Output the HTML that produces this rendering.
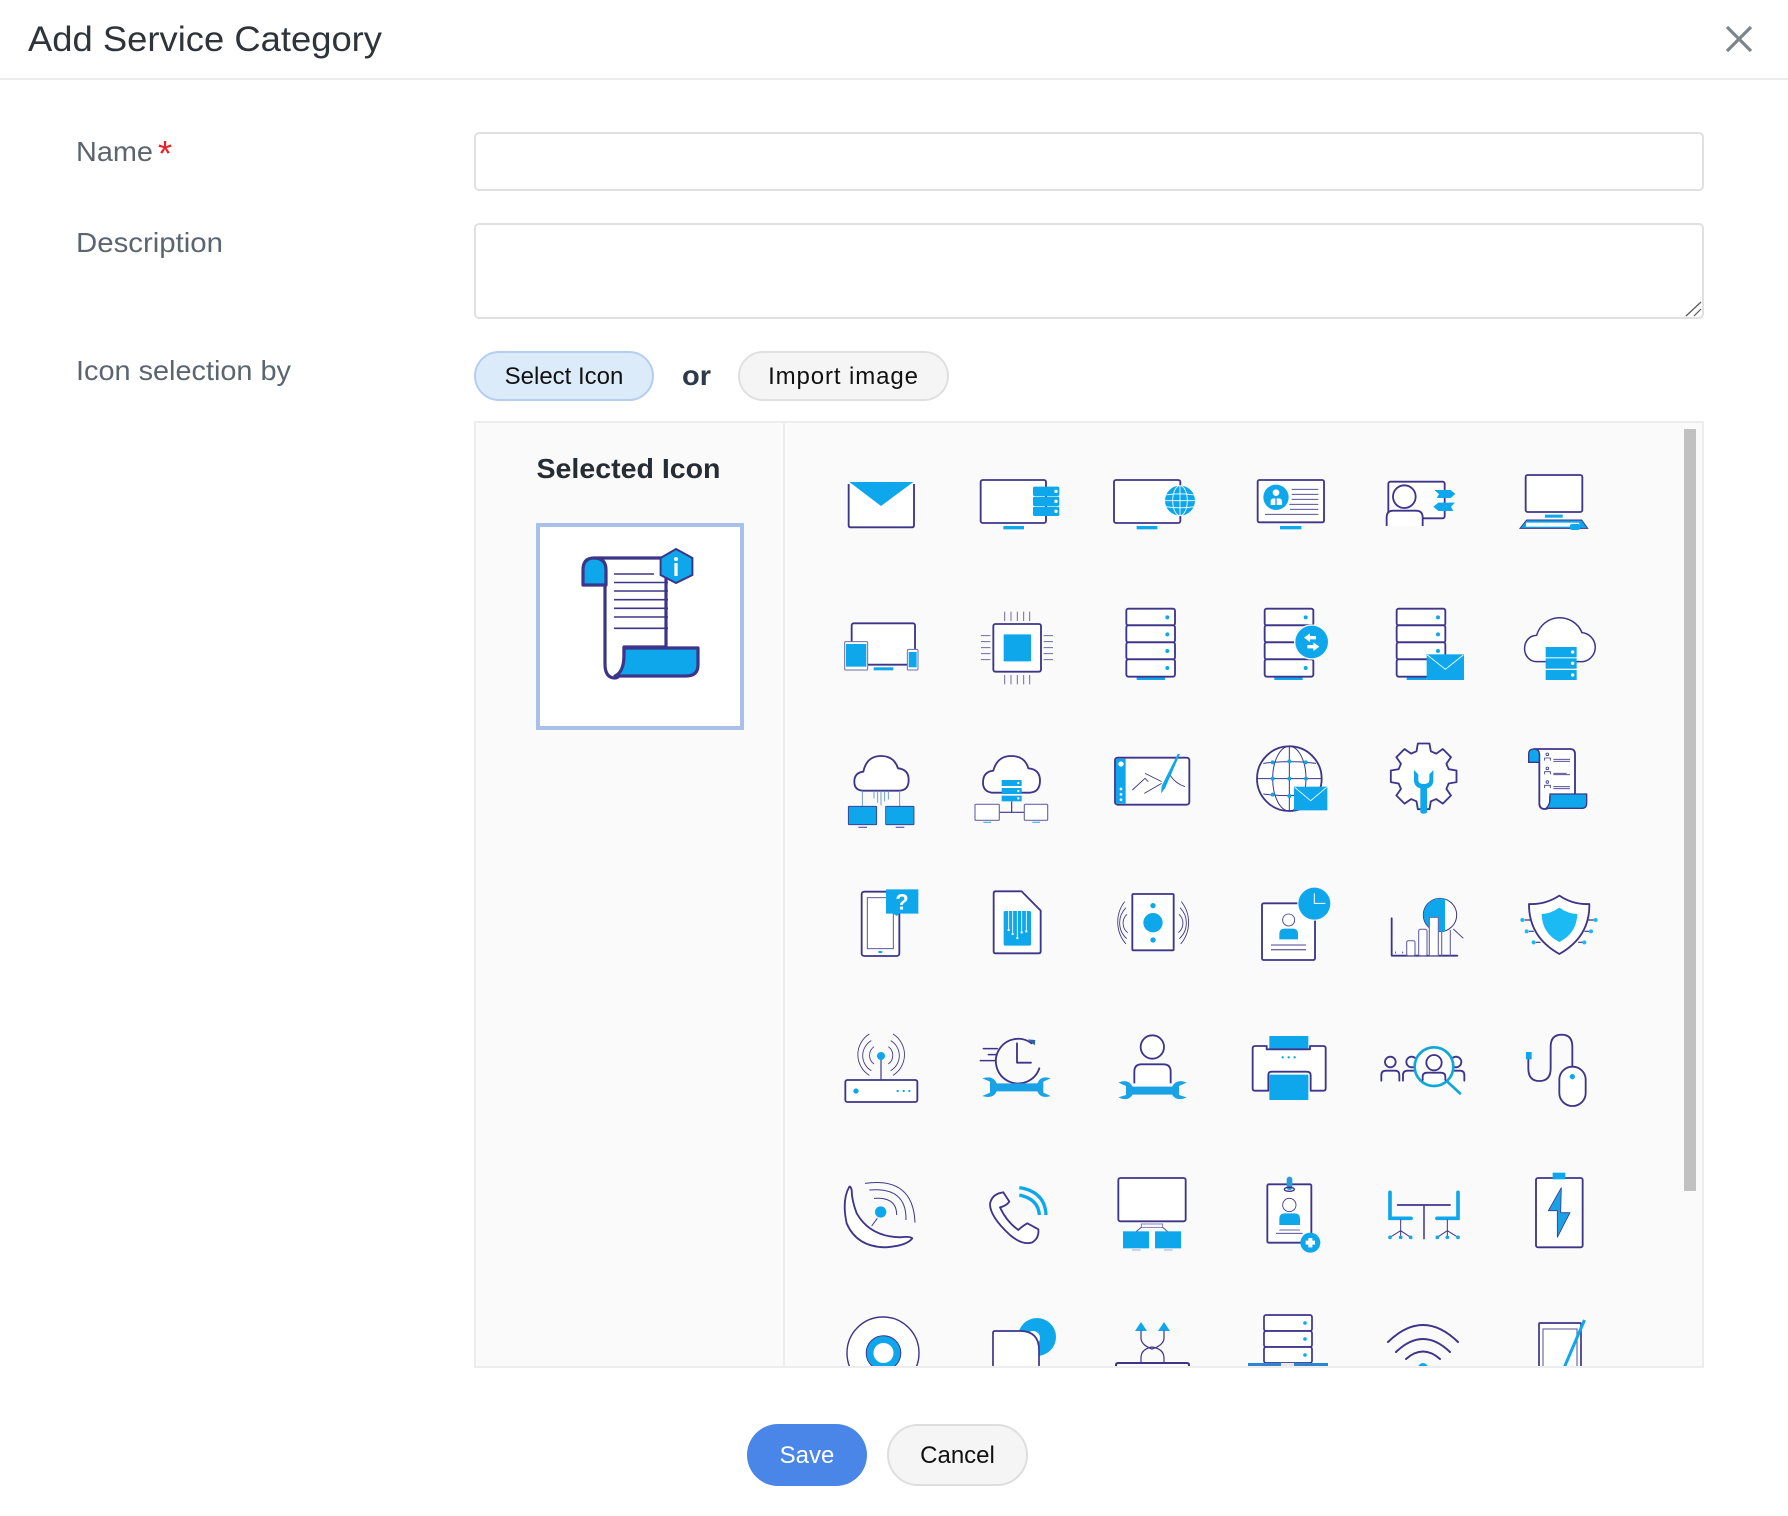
<!DOCTYPE html>
<html lang="en">
<head>
<meta charset="utf-8">
<title>Add Service Category</title>
<style>
html,body{margin:0;padding:0;background:#fff;}
body{width:1788px;height:1516px;position:relative;overflow:hidden;font-family:"Liberation Sans",sans-serif;}
.abs{position:absolute;box-sizing:border-box;}
.hline{left:0;top:78px;width:1788px;height:2px;background:#ececec;}
.field{left:474px;width:1230px;border:2px solid #e0e0e0;border-radius:5px;background:#fff;margin:0;padding:0;outline:none;display:block;resize:none;}
.btn{border-radius:25px;font-family:"Liberation Sans",sans-serif;font-size:24px;color:#111;padding:2px 0 0;margin:0;text-align:center;}
.panel{left:474px;top:421px;width:1230px;height:947px;background:#fafafa;border:2px solid #ededed;}
.divider{left:783px;top:423px;width:2px;height:943px;background:#ededed;}
.selbox{left:536px;top:523px;width:208px;height:207px;background:#fff;border:4px solid #a9c1ea;}
.scroll{left:1684px;top:429px;width:12px;height:762px;background:#c1c1c1;}
svg{position:absolute;left:0;top:0;pointer-events:none;}
.o{fill:#fff;stroke:#3d3589;stroke-width:5.5;stroke-linejoin:round;}
.n{fill:none;stroke:#3d3589;stroke-width:5.5;stroke-linecap:round;stroke-linejoin:round;}
.t{fill:none;stroke:#3d3589;stroke-width:2.6;}
.g{fill:none;stroke:#6f6ba8;stroke-width:3;}
.c{fill:#0ea7ec;}
.w{fill:#fff;}
.wl{fill:none;stroke:#fff;stroke-width:2.6;}
.cl{fill:none;stroke:#0ea7ec;stroke-linecap:round;}
.o2{fill:#fff;stroke:#3d3589;stroke-width:1.7;}
.n2{fill:none;stroke:#3d3589;stroke-width:1.7;stroke-linecap:round;}
.n3{fill:none;stroke:#3d3589;stroke-width:3.2;stroke-linejoin:round;}
.c3{fill:#0ea7ec;stroke:#3d3589;stroke-width:3.2;stroke-linejoin:round;}
.l3{fill:none;stroke:#3d3589;stroke-width:1.6;}
</style>
</head>
<body>
<div class="abs hline"></div>
<input class="abs field" style="top:132px;height:59px;" type="text" aria-label="Name">
<textarea class="abs field" style="top:223px;height:96px;" aria-label="Description"></textarea>
<button class="abs btn" style="left:474px;top:351px;width:180px;height:50px;background:#dcebfa;border:2px solid #b5cdf1;">Select Icon</button>
<button class="abs btn" style="left:738px;top:351px;width:211px;height:50px;background:#f5f5f5;border:2px solid #e0e0e0;letter-spacing:.9px;">Import image</button>
<div class="abs panel"></div>
<div class="abs divider"></div>
<div class="abs selbox"></div>
<div class="abs scroll"></div>
<button class="abs btn" style="left:747px;top:1424px;width:120px;height:62px;border-radius:31px;background:#4a86e8;border:0;color:#fff;">Save</button>
<button class="abs btn" style="left:887px;top:1424px;width:141px;height:62px;border-radius:31px;background:#f5f5f5;border:2px solid #dedede;">Cancel</button>

<svg width="1788" height="1516" viewBox="0 0 1788 1516" xmlns="http://www.w3.org/2000/svg">
<defs><clipPath id="pc"><rect x="785" y="423" width="899" height="943"/></clipPath></defs>

<!-- text -->
<text x="28" y="51" font-family="Liberation Sans, sans-serif" font-size="35" fill="#2e3439" textLength="354" lengthAdjust="spacingAndGlyphs">Add Service Category</text>
<text x="76" y="161" font-family="Liberation Sans, sans-serif" font-size="28" fill="#5b6570" textLength="77" lengthAdjust="spacingAndGlyphs">Name</text>
<text x="158" y="166" font-family="Liberation Sans, sans-serif" font-size="36" fill="#ee1c25">*</text>
<text x="76" y="252" font-family="Liberation Sans, sans-serif" font-size="28" fill="#5b6570" textLength="147" lengthAdjust="spacingAndGlyphs">Description</text>
<text x="76" y="380" font-family="Liberation Sans, sans-serif" font-size="28" fill="#5b6570" textLength="215" lengthAdjust="spacingAndGlyphs">Icon selection by</text>
<text x="682" y="385" font-family="Liberation Sans, sans-serif" font-size="28" font-weight="700" fill="#2d3a47" textLength="29" lengthAdjust="spacingAndGlyphs">or</text>
<text x="536.5" y="478" font-family="Liberation Sans, sans-serif" font-size="28" font-weight="700" fill="#262c33" textLength="184" lengthAdjust="spacingAndGlyphs">Selected Icon</text>

<!-- close -->
<path d="M1727 27L1751 51M1751 27L1727 51" stroke="#7b858b" stroke-width="3.2" fill="none"/>
<!-- resize handle -->
<path d="M1686 316L1701 302M1694 316L1701 309" stroke="#555" stroke-width="1.2" fill="none"/>

<!-- selected icon -->
<path class="n3" style="fill:#fff" d="M594 558H666V647H624V660Q622 678 615 678Q605 678 605 664V585"/>
<path class="c3" d="M583 585V570Q583 558 594 558Q606 558 606 570V585Z"/>
<path class="l3" d="M614 574H654M614 582.5H668M614 591H668M614 599.7H668M614 608.3H668M614 617H668M614 628.3H668"/>
<path class="c3" d="M624 648H698V665Q698 676 686 676H615Q624 672 624 655Z"/>
<path fill="#0ea7ec" stroke="#3d3589" stroke-width="2" d="M676 549L692.4 558V575L676 583L660.6 575V558Z"/>
<circle cx="676" cy="559" r="2" class="w"/><rect x="674.4" y="563" width="3.2" height="13" class="w"/>

<!-- Rows 1-2, cols 1-3 -->
<g transform="translate(800 440) scale(.33333)">
 <path class="o" d="M146 132V256Q146 262 152 262H336Q342 262 342 256V132"/>
 <path class="c" d="M148 126H340L243 198Z"/>

 <rect class="o" x="542" y="120" width="196" height="129" rx="6"/>
 <rect class="c" x="610" y="258" width="62" height="10"/>
 <rect class="c" x="699" y="140" width="79" height="28" rx="5"/><rect class="c" x="699" y="170" width="79" height="28" rx="5"/><rect class="c" x="699" y="200" width="79" height="28" rx="5"/>
 <circle class="w" cx="768" cy="154" r="5"/><circle class="w" cx="768" cy="184" r="5"/><circle class="w" cx="768" cy="214" r="5"/>

 <rect class="o" x="942" y="120" width="199" height="129" rx="6"/>
 <rect class="c" x="1010" y="258" width="62" height="10"/>
 <circle class="c" cx="1140" cy="182" r="45"/>
 <path class="wl" d="M1140 137V227M1098 165Q1140 158 1182 165M1095 182H1185M1098 200Q1140 207 1182 200"/><ellipse class="wl" cx="1140" cy="182" rx="22" ry="45"/>

 <rect class="o" x="155" y="550" width="190" height="124" rx="6"/>
 <rect class="c" x="221" y="682" width="59" height="9"/>
 <rect class="w" x="134" y="605" width="69" height="85" rx="3" stroke="#6f6ba8" stroke-width="3"/>
 <rect class="c" x="138" y="612" width="61" height="68"/>
 <rect class="w" x="322" y="628" width="32" height="62" rx="4" stroke="#6f6ba8" stroke-width="3"/>
 <rect class="c" x="326" y="636" width="24" height="46"/>

 <rect class="o" x="580" y="552" width="143" height="143" rx="6"/>
 <rect class="c" x="611" y="583" width="82" height="81" rx="2"/>
 <path class="g" d="M614 515V543M633 515V543M652 515V543M671 515V543M689 515V543M614 705V733M633 705V733M652 705V733M671 705V733M689 705V733M543 587H571M543 605H571M543 623H571M543 641H571M543 659H571M731 587H759M731 605H759M731 623H759M731 641H759M731 659H759"/>

 <rect class="c" x="1010" y="708" width="85" height="12"/>
 <rect class="o" x="979" y="506" width="146" height="50" rx="6"/><rect class="o" x="979" y="556" width="146" height="51" rx="6"/><rect class="o" x="979" y="607" width="146" height="51" rx="6"/><rect class="o" x="979" y="658" width="146" height="52" rx="6"/>
 <circle class="c" cx="1102" cy="532" r="6"/><circle class="c" cx="1102" cy="583" r="6"/><circle class="c" cx="1102" cy="633" r="6"/><circle class="c" cx="1102" cy="684" r="6"/>
</g>

<!-- Rows 1-2, cols 4-6 -->
<g transform="translate(1240 440) scale(.33333)">
 <rect class="o" x="53" y="120" width="199" height="127" rx="5"/>
 <rect class="c" x="120" y="258" width="64" height="10"/>
 <circle class="c" cx="108" cy="172" r="38"/><circle class="w" cx="108" cy="158" r="10"/>
 <path class="w" d="M92 195V184Q92 175 102 175H106V195ZM110 195V175H116Q126 175 126 184V195Z"/>
 <path class="t" d="M155 148H235M155 163H235M155 178H235M148 193H235M150 208H235M75 223H235"/>

 <rect class="o" x="445" y="125" width="169" height="110" rx="6"/>
 <path class="c" d="M583 150H632L646 162L632 174H590L597 162ZM645 188H595L580 200L595 213H640L633 200Z"/>
 <circle cx="493" cy="170" r="34" class="o"/>
 <path class="o" d="M440 258V232Q440 212 460 212H528Q548 212 548 232V258"/>

 <rect class="o" x="857" y="105" width="170" height="111" rx="6"/>
 <rect class="c" x="915" y="224" width="53" height="9"/>
 <path d="M860 240H1025L1043 265H840Z" fill="#0ea7ec" stroke="#3d3589" stroke-width="3"/>
 <rect class="w" x="858" y="248" width="160" height="12"/>
 <rect class="c" x="990" y="252" width="30" height="18" rx="6"/>

 <rect class="c" x="103" y="708" width="85" height="12"/>
 <rect class="o" x="74" y="506" width="146" height="50" rx="6"/><rect class="o" x="74" y="556" width="146" height="51" rx="6"/><rect class="o" x="74" y="607" width="146" height="51" rx="6"/><rect class="o" x="74" y="658" width="146" height="52" rx="6"/>
 <circle class="c" cx="197" cy="532" r="6"/><circle class="c" cx="197" cy="684" r="6"/>
 <circle cx="215" cy="606" r="53" fill="#fafafa"/><circle class="c" cx="215" cy="606" r="49"/>
 <path class="w" d="M192 593L210 580V588H228V598H210V606ZM238 620L220 607V615H202V625H220V633Z"/>

 <rect class="c" x="500" y="708" width="60" height="12"/>
 <rect class="o" x="470" y="506" width="146" height="50" rx="6"/><rect class="o" x="470" y="556" width="146" height="51" rx="6"/><rect class="o" x="470" y="607" width="146" height="51" rx="6"/><rect class="o" x="470" y="658" width="146" height="52" rx="6"/>
 <circle class="c" cx="594" cy="532" r="6"/><circle class="c" cx="594" cy="583" r="6"/><circle class="c" cx="594" cy="633" r="6"/>
 <rect class="c" x="560" y="643" width="112" height="77"/>
 <path class="wl" d="M562 645L616 688L670 645"/>

 <path class="o" style="stroke-width:4.5" d="M888 665A34 38 0 0 1 890 586A72 72 0 0 1 1026 578A44 44 0 0 1 1030 665Z"/>
 <rect class="c" x="917" y="621" width="93" height="31"/><rect class="c" x="917" y="655" width="93" height="31"/><rect class="c" x="917" y="690" width="93" height="30"/>
 <circle class="w" cx="998" cy="636" r="5"/><circle class="w" cx="998" cy="670" r="5"/><circle class="w" cx="998" cy="705" r="5"/>
</g>

<!-- Rows 3-4, cols 1-3 -->
<g transform="translate(800 730) scale(.33333)">
 <path class="o" d="M190 182Q163 182 163 155Q163 128 190 125Q200 78 243 78Q282 78 294 115Q326 118 326 150Q326 182 296 182Z"/>
 <path class="t" style="stroke:#5e8fc0" d="M187 182V228M299 182V228M222 182V206M233 182V218M243 182V226M254 182V214M265 182V208"/>
 <rect x="145" y="229" width="85" height="55" rx="2" fill="#0ea7ec" stroke="#3d3589" stroke-width="2.5"/>
 <rect x="257" y="229" width="85" height="55" rx="2" fill="#0ea7ec" stroke="#3d3589" stroke-width="2.5"/>
 <rect x="175" y="290" width="26" height="4" fill="#6f6ba8"/><rect x="287" y="290" width="26" height="4" fill="#6f6ba8"/>

 <path class="o" d="M575 188Q549 184 549 158Q549 125 580 122Q592 78 633 78Q675 78 685 115Q720 118 720 152Q720 186 690 188Z"/>
 <rect class="c" x="605" y="150" width="60" height="18"/><rect class="c" x="605" y="174" width="60" height="18"/><rect class="c" x="605" y="197" width="60" height="17"/>
 <circle class="w" cx="655" cy="159" r="3.5"/><circle class="w" cx="655" cy="183" r="3.5"/><circle class="w" cx="655" cy="205" r="3.5"/>
 <path class="t" style="stroke-width:3.5" d="M635 214V247M598 247H673"/>
 <rect x="525" y="223" width="73" height="48" rx="3" fill="#fff" stroke="#6f6ba8" stroke-width="3.5"/>
 <rect x="673" y="223" width="70" height="48" rx="3" fill="#fff" stroke="#6f6ba8" stroke-width="3.5"/>
 <rect class="c" x="550" y="275" width="23" height="4" opacity=".7"/><rect class="c" x="697" y="275" width="23" height="4" opacity=".7"/>

 <rect class="o" x="945" y="83" width="223" height="141" rx="8"/>
 <path fill="#0ea7ec" d="M977 86H953Q948 86 948 91V216Q948 221 953 221H977Z"/>
 <circle class="w" cx="963" cy="102" r="8"/><circle class="w" cx="963" cy="177" r="4"/><circle class="w" cx="963" cy="193" r="4"/><circle class="w" cx="963" cy="209" r="4"/>
 <path class="t" d="M997 180L1035 145L1045 155M1033 190L1085 160M1035 130L1085 155M1110 135Q1125 160 1155 170"/>
 <path class="c" d="M1133 72H1140L1095 175L1083 190L1085 168Z"/>

 <rect class="o" x="185" y="485" width="113" height="193" rx="8"/>
 <rect x="202" y="503" width="78" height="153" fill="none" stroke="#5c5698" stroke-width="3"/>
 <rect class="c" x="235" y="663" width="12" height="6" rx="2"/>
 <path class="c" d="M258 478H355V551H298L290 558L280 551H258Z"/>
 <text x="306" y="539" text-anchor="middle" font-family="Liberation Sans, sans-serif" font-weight="700" font-size="66" fill="#fff">?</text>

 <path class="o" d="M581 490Q581 484 587 484H665L722 542V664Q722 670 716 670H587Q581 670 581 664Z"/>
 <rect class="c" x="611" y="543" width="82" height="104" rx="5"/>
 <path class="wl" d="M626 543V600M638 543V612M652 543V624M665 543V607M679 543V604"/>
 <circle class="w" cx="626" cy="600" r="3.5"/><circle class="w" cx="638" cy="612" r="3.5"/><circle class="w" cx="652" cy="624" r="3.5"/><circle class="w" cx="665" cy="607" r="3.5"/><circle class="w" cx="679" cy="604" r="3.5"/>

 <rect class="o" x="997" y="492" width="124" height="169" rx="3"/>
 <circle class="c" cx="1059" cy="578" r="29"/><circle class="c" cx="1059" cy="527" r="8"/><circle class="c" cx="1059" cy="630" r="8"/>
 <path class="t" d="M974 515A100 100 0 0 0 978 642M978 533A64 64 0 0 0 980 626M981 553A36 36 0 0 0 983 608M1144 515A100 100 0 0 1 1142 642M1140 533A64 64 0 0 1 1138 626M1137 553A36 36 0 0 1 1135 608"/>
</g>

<!-- Rows 3-4, cols 4-6 -->
<g transform="translate(1240 730) scale(.33333)">
 <circle class="o" cx="148" cy="146" r="97"/>
 <path class="t" style="stroke-width:3" d="M148 49V243M70 100Q148 90 228 100M53 146H243M70 192Q148 202 228 192"/><ellipse class="t" style="stroke-width:3" cx="148" cy="146" rx="50" ry="97"/>
 <circle class="c" cx="98" cy="97" r="6"/><circle class="c" cx="148" cy="94" r="6"/><circle class="c" cx="197" cy="97" r="6"/><circle class="c" cx="98" cy="146" r="6"/><circle class="c" cx="148" cy="146" r="6"/><circle class="c" cx="198" cy="146" r="6"/><circle class="c" cx="98" cy="194" r="6"/><circle class="c" cx="148" cy="198" r="6"/>
 <rect class="c" x="162" y="170" width="100" height="71"/>
 <path class="wl" d="M164 172L212 212L260 172"/>

 <path class="o" d="M529.5 64L533.6 40.5H568.4L572.5 64L588.8 70.8L608.4 57.1L632.9 81.6L619.2 101.2L626 117.5L649.5 121.6V156.4L626 160.5L619.2 176.8L632.9 196.4L608.4 220.9L588.8 207.2L572.5 214L568.4 237.5H533.6L529.5 214L513.2 207.2L493.6 220.9L469.1 196.4L482.8 176.8L476 160.5L452.5 156.4V121.6L476 117.5L482.8 101.2L469.1 81.6L493.6 57.1L513.2 70.8Z"/>
 <path class="c" d="M522 120V150Q522 170 541 175V245Q541 251 551 251Q561 251 561 245V175Q580 170 580 150V120L568 133V150Q568 162 551 162Q535 162 535 150V133Z"/>

 <path class="o" d="M882 57H990Q1005 57 1005 72V200H930V215Q930 237 915 237Q898 237 898 220V72Z"/>
 <path d="M866 97V72Q866 57 882 57Q898 57 898 72V97Z" fill="#0ea7ec" stroke="#3d3589" stroke-width="4"/>
 <path class="t" d="M940 88H990M940 94H990M940 130H980M940 134H990M940 170H990M940 176H990"/>
 <g class="t"><circle cx="922" cy="73" r="4" class="t"/><path class="t" d="M914 92V84H931V92M914 133V125H931V133M914 174V166H931V174"/><circle cx="922" cy="115" r="4" class="t"/><circle cx="922" cy="156" r="4" class="t"/></g>
 <path d="M930 192H1040V220Q1040 235 1025 235H918Q930 225 930 205Z" fill="#0ea7ec" stroke="#3d3589" stroke-width="4"/>

 <rect class="o" x="66" y="520" width="159" height="170" rx="5"/>
 <circle cx="223" cy="521" r="51" fill="#fafafa"/><circle class="c" cx="223" cy="521" r="48"/>
 <path class="wl" style="stroke-width:3" d="M223 490V520H256"/>
 <circle cx="146" cy="570" r="18" class="t" fill="none"/>
 <path class="c" d="M118 628V612Q118 596 134 596H158Q174 596 174 612V628Z"/>
 <path class="g" style="stroke-width:4" d="M93 645H198M93 659H198"/>

 <path class="n" d="M455 565V677H652"/>
 <rect x="500" y="632" width="25" height="45" rx="5" fill="#fff" stroke="#6f6ba8" stroke-width="3.5"/>
 <rect x="536" y="598" width="25" height="79" rx="5" fill="#fff" stroke="#6f6ba8" stroke-width="3.5"/>
 <circle cx="600" cy="555" r="50" fill="#fff" stroke="#3d3589" stroke-width="3"/>
 <path class="c" d="M615 507A50 50 0 1 0 615 603Z"/>
 <rect x="568" y="562" width="27" height="115" fill="#fff" stroke="#6f6ba8" stroke-width="3.5"/>
 <path class="g" style="stroke-width:3.5" d="M605 603V677M631 600V677"/>
 <path class="t" d="M640 597L670 625M467 665V670M488 665V670"/>

 <path class="n" style="stroke-width:3.5" d="M870 570H855M880 604H868M900 637H889M1045 570H1060M1035 604H1046M1016 637H1027"/>
 <path class="o" d="M958 497Q1000 525 1048 522Q1050 620 958 672Q866 620 867 522Q915 525 958 497Z"/>
 <path fill="#1cbaf4" d="M958 533Q985 552 1012 552Q1010 610 958 636Q906 610 905 552Q930 552 958 533Z"/>
 <g fill="#1cbaf4"><circle cx="847" cy="570" r="6"/><circle cx="860" cy="604" r="6"/><circle cx="881" cy="637" r="6"/><circle cx="1067" cy="570" r="6"/><circle cx="1053" cy="604" r="6"/><circle cx="1033" cy="637" r="6"/></g>
</g>

<!-- Rows 5-6, cols 1-3 -->
<g transform="translate(800 1000) scale(.33333)">
 <rect class="o" x="136" y="240" width="216" height="66" rx="6"/>
 <circle class="c" cx="168" cy="273" r="8"/>
 <circle class="c" cx="293" cy="273" r="3.5"/><circle class="c" cx="311" cy="273" r="3.5"/><circle class="c" cx="328" cy="273" r="3.5"/>
 <path class="n" style="stroke-width:3.5" d="M243 175V240"/>
 <circle class="c" cx="243" cy="168" r="12"/>
 <path class="t" d="M208 102A73 73 0 0 0 208 226M214 122A52 52 0 0 0 214 212M222 140A32 32 0 0 0 222 192M279 102A73 73 0 0 1 279 226M272 122A52 52 0 0 1 272 212M265 140A32 32 0 0 1 265 192"/>

 <path class="n" d="M695 130A67 67 0 1 0 718 205"/>
 <path d="M684 118L706 120L704 136Z" fill="#2a62b0"/>
 <path class="n" d="M651 130V188H693"/>
 <path class="n" style="stroke-width:4.5" d="M550 146H592M565 164H590M541 182H585"/>
 <path fill="#19a3e6" d="M547 235Q580 225 590 250H712Q722 225 752 235L730 245V278L752 288Q722 298 712 274H590Q580 298 547 288L570 278V245Z"/>

 <circle class="o" cx="1057" cy="141" r="35"/>
 <path class="o" d="M1003 250V215Q1003 193 1025 193H1090Q1112 193 1112 215V250"/>
 <path fill="#19a3e6" d="M955 248Q985 235 998 260H1116Q1130 235 1160 248L1137 258V285L1160 292Q1130 306 1116 284H998Q985 306 955 292L978 285V258Z"/>

 <path class="o" d="M148 560Q125 600 140 670Q170 740 255 742Q320 738 337 715Q330 708 300 712Q210 710 170 640Q155 600 155 570Q152 558 148 560Z"/>
 <circle class="c" cx="242" cy="636" r="17"/>
 <path class="t" style="stroke-width:3" d="M215 678L232 655M222 595Q290 590 290 645M208 570Q320 560 318 660M195 550Q340 530 345 668"/>

 <path class="o" d="M610 577Q575 582 570 612Q570 650 630 705Q665 735 695 728Q718 715 715 688L682 670Q665 680 655 690Q620 665 600 622Q618 618 628 605Z"/>
 <path class="cl" style="stroke-width:10;stroke-linecap:butt" d="M658 563Q735 575 738 645M658 585Q715 597 718 645"/>

 <rect class="o" x="955" y="534" width="202" height="130" rx="6"/>
 <rect x="1024" y="672" width="64" height="10" fill="#fff" stroke="#6f6ba8" stroke-width="2.5"/>
 <path class="t" d="M1024 682L1008 695M1088 682L1103 695"/>
 <rect class="c" x="969" y="694" width="78" height="51"/><rect class="c" x="1065" y="694" width="78" height="51"/>
 <path stroke="#8c8ab8" stroke-width="2.5" d="M996 750H1022M1092 750H1118"/>
</g>

<!-- Rows 5-6, cols 4-6 -->
<g transform="translate(1240 1000) scale(.33333)">
 <rect class="c" x="88" y="108" width="117" height="40"/>
 <path class="o" d="M80 148V138H45Q38 138 38 145V265Q38 272 45 272H85V225Q85 215 95 215H200Q212 215 212 225V272H250Q257 272 257 265V145Q257 138 250 138H210V148Z"/>
 <rect class="c" x="88" y="224" width="117" height="76"/>
 <circle class="c" cx="128" cy="172" r="3.5"/><circle class="c" cx="146" cy="172" r="3.5"/><circle class="c" cx="164" cy="172" r="3.5"/>

 <circle class="o" cx="451" cy="186" r="16"/>
 <path class="n" d="M424 242V225Q424 212 438 212H465Q478 212 478 225V242"/>
 <circle class="o" cx="515" cy="186" r="16"/><circle class="o" cx="648" cy="186" r="16"/>
 <path class="n" d="M489 242V225Q489 212 503 212H530M640 212H660Q673 212 673 225V242"/>
 <circle cx="582" cy="200" r="58" fill="#fff" stroke="#0ea7d8" stroke-width="8"/>
 <circle class="o" cx="582" cy="188" r="23"/>
 <path class="n" d="M548 240V230Q548 218 562 218H602Q616 218 616 230V240"/>
 <path class="cl" style="stroke:#0ea7d8;stroke-width:8" d="M622 245L660 280"/>

 <path class="n" d="M997 200V140Q997 104 965 104Q932 104 932 140V205Q932 243 898 243Q865 243 865 205V178"/>
 <rect class="c" x="858" y="156" width="17" height="22"/>
 <rect class="o" x="958" y="200" width="79" height="118" rx="39"/>
 <circle class="c" cx="997" cy="230" r="8"/>

 <rect class="o" x="82" y="553" width="132" height="175" rx="4"/>
 <rect x="140" y="530" width="17" height="40" rx="8" fill="#2a9bd8"/>
 <ellipse cx="148" cy="568" rx="15" ry="6" fill="none" stroke="#3d3589" stroke-width="4"/>
 <circle cx="148" cy="615" r="20" class="t" fill="none"/>
 <path class="c" d="M118 675V655Q118 640 134 640H164Q180 640 180 655V675Z"/>
 <path class="t" d="M118 690H180M108 700H188"/>
 <circle cx="211" cy="728" r="30" class="c"/>
 <path class="w" d="M205 714H217V722H225V734H217V742H205V734H197V722H205Z"/>

 <path class="cl" style="stroke-width:11" d="M450 577V655H513M654 577V655H591"/>
 <path class="n" d="M473 615H630"/>
 <path class="n" style="stroke-width:4.5" d="M552 615V716"/>
 <path class="t" style="stroke-width:3" d="M482 658V692L450 712M482 692V712M482 692L512 712M622 658V692L592 712M622 692V712M622 692L654 712"/>
 <g class="c"><circle cx="450" cy="712" r="5.5"/><circle cx="482" cy="712" r="5.5"/><circle cx="512" cy="712" r="5.5"/><circle cx="592" cy="712" r="5.5"/><circle cx="622" cy="712" r="5.5"/><circle cx="654" cy="712" r="5.5"/></g>

 <rect class="o" x="888" y="534" width="140" height="208" rx="6"/>
 <rect class="c" x="938" y="518" width="38" height="20"/>
 <path fill="#19a3e6" stroke="#3d3589" stroke-width="2.5" stroke-linejoin="round" d="M964 563L925 632H952V712L990 638H962Z"/>
</g>

<!-- Row 7 (clipped) -->
<g clip-path="url(#pc)">
 <circle class="o2" style="stroke-width:1.4" cx="883" cy="1353" r="36"/>
 <circle cx="883.5" cy="1353" r="13.5" fill="#fff" stroke="#0ea7ec" stroke-width="7"/>
 <circle cx="883.5" cy="1353" r="17.3" fill="none" stroke="#3d3589" stroke-width="1"/>

 <circle class="c" cx="1037" cy="1337" r="19"/><circle class="w" cx="1033" cy="1338" r="7"/>
 <path class="o2" d="M993 1380V1333Q993 1331 995 1331H1020Q1039 1331 1039 1350V1380Z"/>

 <path class="c" d="M1141 1322L1147 1331H1135ZM1164 1322L1170 1331H1158Z"/>
 <path class="n2" style="stroke-width:1.2" d="M1141 1331V1338Q1141 1345 1152 1349Q1164 1345 1164 1338V1331M1141 1363V1358Q1141 1349 1152 1347Q1164 1349 1164 1358V1363"/>
 <path d="M1116 1372V1365Q1116 1363 1118 1363H1187Q1189 1363 1189 1365V1372" fill="#fff" stroke="#3d3589" stroke-width="2"/>

 <rect class="o2" x="1264" y="1315" width="48" height="16" rx="2"/><rect class="o2" x="1264" y="1331" width="48" height="16" rx="2"/><rect class="o2" x="1264" y="1347" width="48" height="16" rx="2"/>
 <circle class="c" cx="1305" cy="1323" r="1.8"/><circle class="c" cx="1305" cy="1339" r="1.8"/><circle class="c" cx="1305" cy="1355" r="1.8"/>
 <rect x="1248" y="1363" width="80" height="4" fill="#2f86cf"/><rect x="1281" y="1363" width="13" height="4" fill="#e8e8f2"/>

 <path class="n2" style="stroke-width:2" d="M1388 1342Q1423 1308 1458 1342M1396 1352Q1423 1326 1450 1352M1406 1359Q1423 1344 1440 1359"/>
 <circle class="c" cx="1423" cy="1368" r="5"/>

 <rect class="o2" x="1539" y="1323" width="42" height="60" rx="1"/>
 <rect x="1543" y="1329" width="34" height="50" fill="none" stroke="#6f6ba8" stroke-width="1.2"/>
 <path class="cl" style="stroke-width:3;stroke-linecap:butt" d="M1584.5 1320L1564 1368"/>
</g>
</svg>
</body>
</html>
